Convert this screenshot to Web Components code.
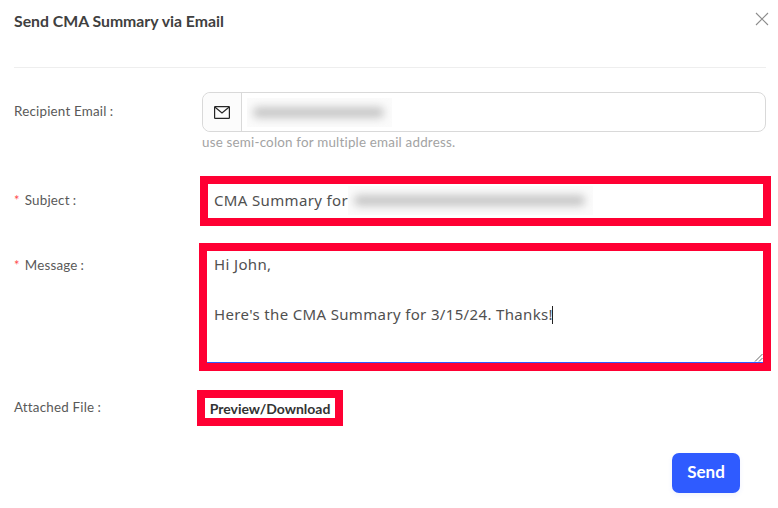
<!DOCTYPE html>
<html lang="en">
<head>
    <title>Send CMA Summary via Email</title>
    <meta charset="utf-8">
    <style>
        html, body { margin: 0; background: #fff; }
    </style>
</head>
<body>
<template id="dialog-template">
    <style>
        :host {
            display: block;
            box-sizing: border-box;
            width: 778px;
            height: 508px;
            padding: 0 12px 0 14px;
            overflow: hidden;
            font-family: Lato, "Liberation Sans", sans-serif;
            color: #555;
        }
        header {
            display: flex;
            justify-content: space-between;
            height: 67px;
            border-bottom: 1px solid #eeeeee;
            margin-bottom: 24px;
        }
        h1 {
            margin: 12px 0 0;
            font-size: 15.8px;
            line-height: 18px;
            font-weight: 700;
            color: #404040;
        }
        svg { display: block; margin: 11px -4px 0 0; }
        footer { display: flex; justify-content: flex-end; padding-right: 26px; }
    </style>
    <header>
        <h1><slot name="title"></slot></h1>
        <svg width="16" height="16" viewBox="0 0 16 16" fill="none" stroke="#8c8c8c" stroke-width="1.1">
            <path d="M2 2l12 12M14 2L2 14"/>
        </svg>
    </header>
    <slot></slot>
    <footer><slot name="actions"></slot></footer>
</template>

<template id="row-template">
    <style>
        :host {
            display: grid;
            grid-template-columns: 188px 1fr;
            margin-bottom: var(--after, 20px);
        }
        .label {
            padding-top: var(--label-top, 10px);
            font-size: 13.4px;
            line-height: 20px;
            letter-spacing: 0.2px;
            color: #595959;
            white-space: nowrap;
        }
        .star { display: none; color: #ff4d4f; margin-right: 5px; font-size: 13px; }
        :host([required]) .star { display: inline; }
        .colon { margin-left: 3px; }
    </style>
    <div class="label"><span class="star">*</span><slot name="label"></slot><span class="colon">:</span></div>
    <div><slot></slot></div>
</template>

<template id="email-template">
    <style>
        :host { display: block; }
        .box {
            display: flex;
            height: 40px;
            box-sizing: border-box;
            border: 1px solid #d9d9d9;
            border-radius: 8px;
            background: #fff;
        }
        .addon {
            display: flex;
            align-items: center;
            justify-content: center;
            width: 38px;
            border-right: 1px solid #d9d9d9;
            background: #fcfcfc;
            border-radius: 8px 0 0 8px;
        }
        .field { flex: 1; display: flex; align-items: center; padding-left: 5px; }
        .hint {
            font-size: 13.4px;
            line-height: 18px;
            margin-top: 1px;
            letter-spacing: 0.2px;
            color: #a3a3a3;
        }
    </style>
    <div class="box">
        <div class="addon">
            <svg width="16" height="13" viewBox="0 0 16 13" fill="none" stroke="#262626" stroke-width="1.2">
                <rect x="0.6" y="0.6" width="14.8" height="11.8" rx="0.6"/>
                <path d="M0.8 1l7.2 6 7.2-6"/>
            </svg>
        </div>
        <div class="field"><slot name="value"></slot></div>
    </div>
    <div class="hint"><slot name="hint"></slot></div>
</template>

<template id="redacted-template">
    <style>
        :host {
            display: block;
            background: #fbfbfb;
            width: var(--w, 100px);
            height: 29px;
            overflow: hidden;
            position: relative;
        }
        i {
            position: absolute;
            left: 6px;
            right: 8px;
            top: 9px;
            height: 11px;
            border-radius: 5px;
            background: #c6c6c6;
            filter: blur(4px);
        }
    </style>
    <i></i>
</template>

<template id="marked-template">
    <style>
        :host {
            display: block;
            box-sizing: border-box;
            border: 8px solid #ff0033;
            background: #fff;
            font-family: "Noto Sans", "Open Sans", sans-serif;
            font-size: 15px;
            letter-spacing: 0.35px;
            color: #505050;
        }
    </style>
    <slot></slot>
</template>

<template id="textarea-template">
    <style>
        :host {
            display: block;
            position: relative;
            box-sizing: border-box;
            height: 112px;
            padding: 1px 7px 0;
            line-height: 25px;
            border-bottom: 1px solid #2f5bff;
        }
        svg { position: absolute; right: 0; bottom: 0; }
        .caret {
            display: inline-block;
            width: 1px;
            height: 18px;
            background: #222;
            vertical-align: -4px;
            margin-left: -1px;
        }
    </style>
    <slot></slot><span class="caret"></span>
    <svg width="9" height="9" viewBox="0 0 9 9" fill="none" stroke="#666" stroke-width="1">
        <path d="M1 8.5L8.5 1M5 8.5L8.5 5"/>
    </svg>
</template>

<template id="button-template">
    <style>
        :host {
            display: flex;
            align-items: center;
            justify-content: center;
            box-sizing: border-box;
            width: 68px;
            height: 40px;
            padding-bottom: 3px;
            border-radius: 7px;
            background: #2f5bff;
            color: #fff;
            font-family: Lato, "Liberation Sans", sans-serif;
            font-size: 17px;
            font-weight: 700;
            box-shadow: 0 2px 5px rgba(47, 91, 255, 0.08);
        }
    </style>
    <slot></slot>
</template>

<send-dialog>
    <span slot="title">Send CMA Summary via Email</span>

    <form-row style="--label-top: 9px; --after: 25px">
        <span slot="label">Recipient Email</span>
        <email-field>
            <blur-block slot="value" style="--w: 145px"></blur-block>
            <span slot="hint">use semi-colon for multiple email address.</span>
        </email-field>
    </form-row>

    <form-row required style="--label-top: 14px; --after: 17px">
        <span slot="label">Subject</span>
        <marked-box style="height: 50px; margin: 0 -5px 0 -2px; display: flex; align-items: center; padding-left: 6px; padding-bottom: 2px">
            <span style="white-space: nowrap">CMA Summary for</span>
            <blur-block style="--w: 245px; margin-left: 0"></blur-block>
        </marked-box>
    </form-row>

    <form-row required style="--label-top: 12px; --after: 19px">
        <span slot="label">Message</span>
        <marked-box style="height: 128px; margin: 0 -5px 0 -3px">
            <message-area>Hi John,<br><br>Here's the CMA Summary for 3/15/24. Thanks!</message-area>
        </marked-box>
    </form-row>

    <form-row style="--label-top: 7px; --after: 27px">
        <span slot="label">Attached File</span>
        <marked-box style="width: 146px; height: 36px; margin-left: -5px; display: flex; align-items: center; justify-content: center; font-family: Lato, sans-serif; font-size: 14px; font-weight: 700; letter-spacing: 0; color: #333">Preview/Download</marked-box>
    </form-row>

    <primary-button slot="actions">Send</primary-button>
</send-dialog>

<script type="module">
    class TemplateElement extends HTMLElement {
        constructor() {
            super()
            this.attachShadow({mode: 'open'})
            const template = document.getElementById(this.constructor.templateId)
            this.shadowRoot.appendChild(template.content.cloneNode(true))
        }
    }

    const elements = {
        'send-dialog': 'dialog-template',
        'form-row': 'row-template',
        'email-field': 'email-template',
        'blur-block': 'redacted-template',
        'marked-box': 'marked-template',
        'message-area': 'textarea-template',
        'primary-button': 'button-template',
    }

    for (const [name, templateId] of Object.entries(elements)) {
        customElements.define(name, class extends TemplateElement {
            static templateId = templateId
        })
    }
</script>
</body>
</html>
